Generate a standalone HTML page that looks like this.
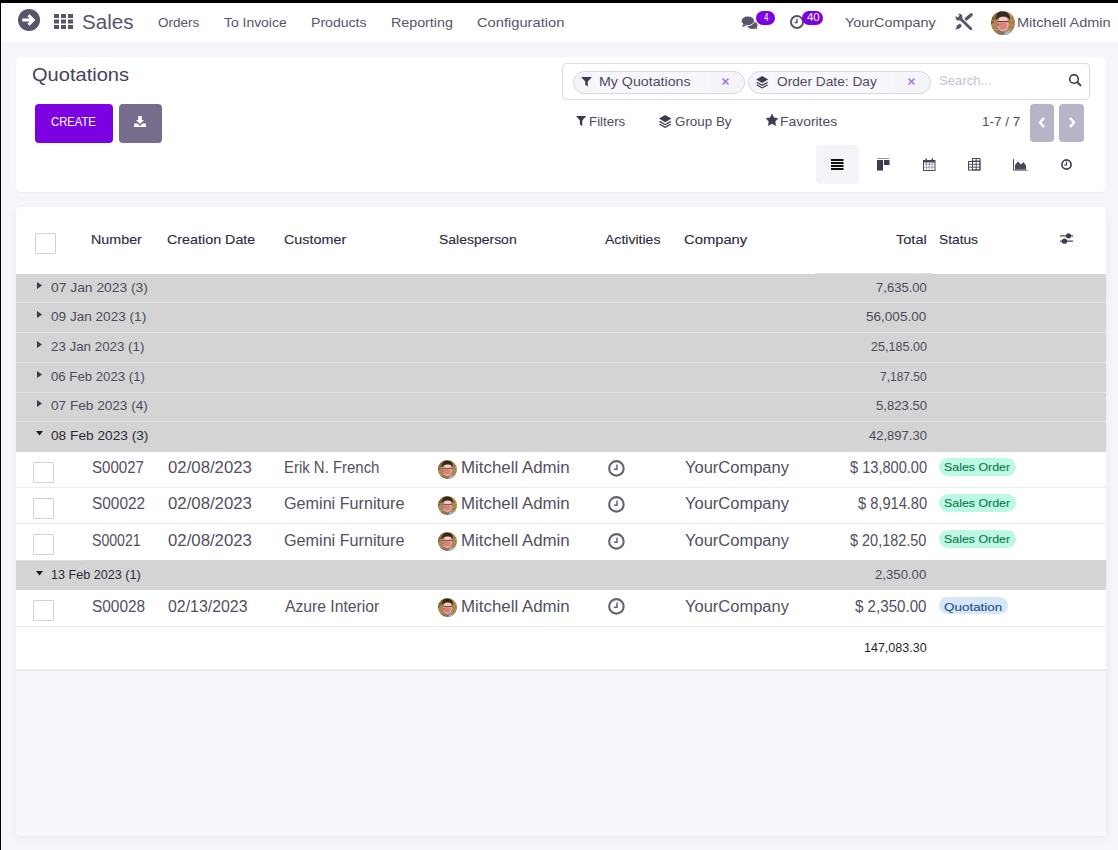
<!DOCTYPE html>
<html><head><meta charset="utf-8">
<style>
html,body{margin:0;padding:0;}
body{width:1118px;height:850px;overflow:hidden;position:relative;background:#f6f5fa;font-family:"Liberation Sans",sans-serif;}
.a{position:absolute;box-sizing:border-box;}
.t{position:absolute;white-space:pre;line-height:1;transform-origin:0 0;font-family:"Liberation Sans",sans-serif;}
svg{position:absolute;overflow:visible;}
</style></head><body>
<svg width="0" height="0" style="position:absolute;left:0;top:0"><defs>
<clipPath id="avc"><circle cx="12" cy="12" r="12"/></clipPath>
<g id="av"><g clip-path="url(#avc)">
<rect width="24" height="24" fill="#a4844f"/>
<path d="M0 0 H11 L0 14Z" fill="#6e5232" opacity=".8"/>
<path d="M0 5H24M0 9.5H24M0 14H24M0 18.5H24" stroke="#c4a46c" stroke-width="1" opacity=".55"/>
<path d="M3 24 Q5 18 12 19 Q20 18.5 22 24Z" fill="#8c7462"/>
<path d="M13 24 Q14 19.5 18 19.5 Q21 20 22 24Z" fill="#a9b6be"/>
<ellipse cx="12" cy="13" rx="5.8" ry="7.4" fill="#e6ad9e"/>
<ellipse cx="12.3" cy="8.2" rx="4.2" ry="2.2" fill="#f0cfc8"/>
<ellipse cx="11.8" cy="14.8" rx="4.2" ry="3.6" fill="#d0505c" opacity=".5"/>
<path d="M5 9.5 Q4.5 0.5 12 0.5 Q19.5 0.5 19.2 10 Q18 5.5 12.3 5.5 Q7 5.5 5 9.5Z" fill="#35271d"/>
<path d="M6.3 10.6 H17.8" stroke="#3a2e2a" stroke-width="0.9"/>
<path d="M7.5 12.5 L6.8 14.5" stroke="#c0222e" stroke-width="1.2"/>
</g></g>
</defs></svg>
<!-- frame -->
<div class="a" style="left:0;top:0;width:1118px;height:3px;background:#000"></div>
<div class="a" style="left:0;top:0;width:1px;height:850px;background:#000"></div>
<!-- navbar -->
<div class="a" style="left:1px;top:3px;width:1117px;height:39px;background:#fff"></div>
<svg style="left:17.8px;top:8.9px" width="22" height="22" viewBox="0 0 22 22">
  <circle cx="11" cy="11" r="11" fill="#58546c"/>
  <path d="M4.2 11 H14.5 M10.5 6.2 L15.3 11 L10.5 15.8" stroke="#fff" stroke-width="3" fill="none" stroke-linecap="butt" stroke-linejoin="miter"/>
</svg>
<svg style="left:54px;top:14px" width="19" height="15" viewBox="0 0 19 15">
  <g fill="#58546c">
    <rect x="0" y="0" width="5" height="4"/><rect x="7" y="0" width="5" height="4"/><rect x="14" y="0" width="5" height="4"/>
    <rect x="0" y="5.5" width="5" height="4"/><rect x="7" y="5.5" width="5" height="4"/><rect x="14" y="5.5" width="5" height="4"/>
    <rect x="0" y="11" width="5" height="4"/><rect x="7" y="11" width="5" height="4"/><rect x="14" y="11" width="5" height="4"/>
  </g>
</svg>
<!-- chat icon -->
<svg style="left:741px;top:15px" width="17" height="15" viewBox="0 0 17 15">
  <ellipse cx="11.5" cy="10.2" rx="5" ry="3.8" fill="#58546c"/>
  <path d="M13.5 12.5 L16.5 14.8 L15.2 11Z" fill="#58546c"/>
  <ellipse cx="6.8" cy="5.8" rx="6.6" ry="4.8" fill="#58546c" stroke="#fff" stroke-width="0.9"/>
  <path d="M2.3 9 L1 12.3 L5.8 10.3Z" fill="#58546c"/>
</svg>
<div class="a" style="left:756px;top:10.8px;width:19px;height:14px;border-radius:7px;background:#7c00e0"></div>

<!-- clock icon -->
<svg style="left:790px;top:14.8px" width="14" height="14" viewBox="0 0 14 14">
  <circle cx="7" cy="7" r="6" fill="#fff" stroke="#58546c" stroke-width="2"/>
  <path d="M7 3.8 V7.5 H4.5" stroke="#58546c" stroke-width="1.4" fill="none"/>
</svg>
<div class="a" style="left:802.3px;top:10.8px;width:20.8px;height:14px;border-radius:7px;background:#7c00e0"></div>

<!-- tools icon -->
<svg style="left:955px;top:12.5px" width="18" height="17" viewBox="0 0 18 17">
  <path d="M11 6.3 L16.2 1.7" stroke="#58546c" stroke-width="3.2" stroke-linecap="round"/>
  <path d="M0.5 16.8 L2 12.4 L4.9 10.4 L6.9 12.4 L4.9 15.2Z" fill="#58546c"/>
  <path d="M5 5.3 L16.2 16" stroke="#fff" stroke-width="4.8" stroke-linecap="round"/>
  <path d="M5 5.3 L15.8 15.7" stroke="#58546c" stroke-width="2.8" stroke-linecap="round"/>
  <circle cx="4" cy="4.2" r="3.4" fill="#58546c"/>
  <path d="M-0.5 1.8 L1.8 -0.5 L4.6 2.6 L2.6 4.6Z" fill="#fff"/>
</svg>
<!-- avatar nav -->
<svg style="left:990.7px;top:10.6px" width="24" height="24" viewBox="0 0 24 24"><use href="#av"/></svg>
<!-- control panel card -->
<div class="a" style="left:16px;top:57px;width:1090px;height:135px;background:#fff;border-radius:5px;box-shadow:0 1px 2px rgba(60,50,90,.04)"></div>
<div class="a" style="left:35px;top:103.6px;width:78px;height:39px;background:#7c00e1;border-radius:4px"></div>
<div class="a" style="left:119px;top:103.6px;width:43px;height:39px;background:#766d8d;border-radius:4px"></div>
<svg style="left:133.9px;top:116.4px" width="12" height="11" viewBox="0 0 12 11">
  <path d="M4.2 0 H7.8 V4 H10 L6 8 L2 4 H4.2Z" fill="#fff"/>
  <path d="M0 7.5 H3.5 L6 10 L8.5 7.5 H12 V11 H0Z" fill="#fff"/>
</svg>
<!-- search box -->
<div class="a" style="left:561.5px;top:63px;width:528px;height:37px;border:1px solid #dcdbe3;border-radius:4px;background:#fff"></div>
<div class="a" style="left:573.4px;top:70.5px;width:171.2px;height:23px;border:1px solid #d9d7e1;border-radius:12px;background:#f5f4f9"></div>
<div class="a" style="left:593.5px;top:71.5px;width:115px;height:21px;background:#f7f6fb"></div>
<svg style="left:581px;top:77.3px" width="11" height="9.5" viewBox="0 0 11 9.5">
  <path d="M0 0 H11 L6.8 4.6 V9.5 L4.2 7.8 V4.6Z" fill="#3f3c54"/>
</svg>
<svg style="left:721.5px;top:77.8px" width="7" height="7" viewBox="0 0 7 7"><path d="M0.5 0.5 L6.5 6.5 M6.5 0.5 L0.5 6.5" stroke="#a46ee8" stroke-width="1.5"/></svg>
<div class="a" style="left:748px;top:70.5px;width:183px;height:23px;border:1px solid #d9d7e1;border-radius:12px;background:#f5f4f9"></div>
<div class="a" style="left:770.4px;top:71.5px;width:124px;height:21px;background:#f7f6fb"></div>
<svg style="left:755.8px;top:75.6px" width="12.4" height="12.6" viewBox="0 0 12.4 13">
  <path d="M6.2 0 L12.4 3.6 L6.2 7.2 L0 3.6Z" fill="#3d3b50"/>
  <path d="M1.2 6.1 L0 6.9 L6.2 10.3 L12.4 6.9 L11.2 6.1 L6.2 8.9Z" fill="#3d3b50"/>
  <path d="M1.2 8.8 L0 9.6 L6.2 13 L12.4 9.6 L11.2 8.8 L6.2 11.6Z" fill="#3d3b50"/>
</svg>
<svg style="left:907.8px;top:77.8px" width="7" height="7" viewBox="0 0 7 7"><path d="M0.5 0.5 L6.5 6.5 M6.5 0.5 L0.5 6.5" stroke="#a46ee8" stroke-width="1.5"/></svg>
<svg style="left:1068.8px;top:73.8px" width="13" height="13" viewBox="0 0 13 13">
  <circle cx="5" cy="5" r="4.3" fill="none" stroke="#2f2d40" stroke-width="1.5"/>
  <path d="M8.2 8.2 L11.5 11.4" stroke="#2f2d40" stroke-width="1.7" stroke-linecap="round"/>
</svg>
<!-- filters row icons -->
<svg style="left:576.4px;top:116px" width="10.2" height="10.2" viewBox="0 0 10.2 10.2">
  <path d="M0 0 H10.2 L6.3 4.5 V10.2 L3.9 8.2 V4.5Z" fill="#3d3b50"/>
</svg>
<svg style="left:659.2px;top:114.5px" width="12.4" height="13" viewBox="0 0 12.4 13">
  <path d="M6.2 0 L12.4 3.6 L6.2 7.2 L0 3.6Z" fill="#3d3b50"/>
  <path d="M1.2 6.1 L0 6.9 L6.2 10.3 L12.4 6.9 L11.2 6.1 L6.2 8.9Z" fill="#3d3b50"/>
  <path d="M1.2 8.8 L0 9.6 L6.2 13 L12.4 9.6 L11.2 8.8 L6.2 11.6Z" fill="#3d3b50"/>
</svg>
<svg style="left:765.8px;top:114.2px" width="12" height="12" viewBox="0 0 12 12">
  <path d="M6.00 0.10 L7.88 3.81 L11.99 4.45 L9.04 7.39 L9.70 11.50 L6.00 9.60 L2.30 11.50 L2.96 7.39 L0.01 4.45 L4.12 3.81Z" fill="#3d3b50" stroke="#3d3b50" stroke-width="0.5" stroke-linejoin="round"/>
</svg>
<!-- pager -->
<div class="a" style="left:1029.5px;top:104px;width:24.5px;height:37.6px;background:#b8b4c7;border-radius:4px"></div>
<div class="a" style="left:1059.3px;top:104px;width:25.2px;height:37.6px;background:#b8b4c7;border-radius:4px"></div>
<svg style="left:1038px;top:117px" width="8" height="11" viewBox="0 0 8 11"><path d="M6 1 L2 5.5 L6 10" stroke="#fff" stroke-width="2.4" fill="none"/></svg>
<svg style="left:1068px;top:117px" width="8" height="11" viewBox="0 0 8 11"><path d="M2 1 L6 5.5 L2 10" stroke="#fff" stroke-width="2.4" fill="none"/></svg>
<!-- view switcher -->
<div class="a" style="left:816px;top:145px;width:43px;height:39px;background:#f4f3f8;border-radius:4px"></div>
<svg style="left:831px;top:158.5px" width="12.5" height="11" viewBox="0 0 12.5 11">
  <g fill="#111"><rect x="0" y="0" width="12.5" height="2"/><rect x="0" y="3" width="12.5" height="2"/><rect x="0" y="6" width="12.5" height="2"/><rect x="0" y="9" width="12.5" height="2"/></g>
</svg>
<svg style="left:877.3px;top:157.8px" width="12.5" height="12.5" viewBox="0 0 12.5 12.5">
  <rect x="0" y="0" width="12.5" height="1" fill="#9a98a6"/>
  <rect x="0" y="2" width="6" height="10.5" fill="#3d3b4d"/>
  <rect x="7" y="2" width="5.5" height="5" fill="#3d3b4d"/>
</svg>
<svg style="left:922.8px;top:158px" width="12.5" height="13" viewBox="0 0 12.5 13">
  <rect x="0.5" y="2.5" width="11.5" height="10" fill="#fff" stroke="#4a4858" stroke-width="1"/>
  <path d="M0.5 6.2 H12 M0.5 9.2 H12 M3.4 4.5 V12.5 M6.2 4.5 V12.5 M9.1 4.5 V12.5" stroke="#8a889a" stroke-width="0.7"/>
  <rect x="0.5" y="2.5" width="11.5" height="2" fill="#4a4858"/>
  <rect x="2.4" y="0.3" width="1.5" height="3.2" rx=".7" fill="#4a4858"/><rect x="8.6" y="0.3" width="1.5" height="3.2" rx=".7" fill="#4a4858"/>
</svg>
<svg style="left:967.8px;top:158px" width="12.5" height="12.5" viewBox="0 0 12.5 12.5">
  <rect x="4.5" y="0.5" width="7.5" height="11.5" fill="none" stroke="#4a4858" stroke-width="1"/>
  <rect x="0.5" y="3.5" width="11.5" height="8.5" fill="none" stroke="#4a4858" stroke-width="1"/>
  <path d="M0.5 6.3 H12 M0.5 9.2 H12 M4.5 3.5 V12 M8.2 0.5 V12 M4.5 3 H12" stroke="#4a4858" stroke-width="0.9"/>
</svg>
<svg style="left:1013.3px;top:158.8px" width="14.5" height="11.6" viewBox="0 0 14.5 11.6">
  <path d="M0.5 0 V11.1 H14.5" stroke="#4a4858" stroke-width="1" fill="none"/>
  <path d="M2 10.5 V6 L5 2.5 L8 5.5 L10.5 3 L13 6.5 V10.5Z" fill="#4a4858"/>
</svg>
<svg style="left:1060.8px;top:159px" width="11" height="11" viewBox="0 0 11 11">
  <circle cx="5.5" cy="5.5" r="4.6" fill="none" stroke="#3d3b4d" stroke-width="1.6"/>
  <path d="M5.5 2.6 V6 H3.3" stroke="#3d3b4d" stroke-width="1.1" fill="none"/>
</svg>

<!-- list card -->
<div class="a" style="left:16px;top:207px;width:1090px;height:629px;background:#f8f7fb;border-radius:3px;box-shadow:0 3px 8px rgba(60,50,90,.06)"></div>
<div class="a" style="left:16px;top:207px;width:1090px;height:462px;background:#fff;border-radius:5px 5px 0 0"></div>
<div class="a" style="left:16px;top:669px;width:1090px;height:1px;background:#f1f0f5"></div>
<div class="a" style="left:16px;top:670px;width:1090px;height:1px;background:#e5e4ea"></div>
<!-- header checkbox -->
<div class="a" style="left:35.3px;top:232.5px;width:20.5px;height:21px;border:1px solid #d2d2d4;border-radius:1px;background:#fff"></div>
<svg style="left:1060px;top:232.6px" width="13" height="11" viewBox="0 0 13 11">
  <path d="M0 2.8 H13 M0 8.2 H13" stroke="#4a4858" stroke-width="1.2"/>
  <circle cx="8.5" cy="2.8" r="2.6" fill="#3d3b4d"/><circle cx="4.5" cy="8.2" r="2.6" fill="#3d3b4d"/>
</svg>
<!-- group rows -->
<div class="a" style="left:16px;top:274px;width:1090px;height:177.6px;background:#d4d4d4"></div>
<div class="a" style="left:16px;top:302px;width:1090px;height:1px;background:#e2e2e6"></div>
<div class="a" style="left:16px;top:332px;width:1090px;height:1px;background:#e2e2e6"></div>
<div class="a" style="left:16px;top:361.5px;width:1090px;height:1px;background:#e2e2e6"></div>
<div class="a" style="left:16px;top:391.5px;width:1090px;height:1px;background:#e2e2e6"></div>
<div class="a" style="left:16px;top:421.2px;width:1090px;height:1px;background:#e2e2e6"></div>
<div class="a" style="left:815px;top:273.4px;width:118px;height:1px;background:#e2e2e2"></div>
<svg style="left:37.2px;top:281.8px" width="5" height="7" viewBox="0 0 5 7"><path d="M0 0 L5 3.5 L0 7Z" fill="#3d3b4d"/></svg>
<svg style="left:37.2px;top:311.4px" width="5" height="7" viewBox="0 0 5 7"><path d="M0 0 L5 3.5 L0 7Z" fill="#3d3b4d"/></svg>
<svg style="left:37.2px;top:341px" width="5" height="7" viewBox="0 0 5 7"><path d="M0 0 L5 3.5 L0 7Z" fill="#3d3b4d"/></svg>
<svg style="left:37.2px;top:370.6px" width="5" height="7" viewBox="0 0 5 7"><path d="M0 0 L5 3.5 L0 7Z" fill="#3d3b4d"/></svg>
<svg style="left:37.2px;top:400.2px" width="5" height="7" viewBox="0 0 5 7"><path d="M0 0 L5 3.5 L0 7Z" fill="#3d3b4d"/></svg>
<svg style="left:36px;top:431.3px" width="7" height="4.5" viewBox="0 0 7 4.5"><path d="M0 0 H7 L3.5 4.5Z" fill="#1a1a28"/></svg>
<!-- record rows separators -->
<div class="a" style="left:16px;top:487px;width:1090px;height:1px;background:#ebebee"></div>
<div class="a" style="left:16px;top:523.3px;width:1090px;height:1px;background:#ebebee"></div>
<div class="a" style="left:16px;top:560.1px;width:1090px;height:29.6px;background:#d4d4d4"></div>
<div class="a" style="left:16px;top:560.1px;width:70px;height:1px;background:#dcdcdc"></div>
<svg style="left:36px;top:570.5px" width="7" height="4.5" viewBox="0 0 7 4.5"><path d="M0 0 H7 L3.5 4.5Z" fill="#1a1a28"/></svg>
<div class="a" style="left:16px;top:626px;width:1090px;height:1px;background:#ebebee"></div>
<div class="a" style="left:32.5px;top:461.6px;width:21px;height:21px;border:1px solid #d2d2d4;border-radius:1px;background:#fff"></div>
<svg style="left:438.2px;top:459.6px" width="19" height="19" viewBox="0 0 24 24"><use href="#av"/></svg>
<svg style="left:608.2px;top:459.9px" width="17" height="17" viewBox="0 0 17 17"><circle cx="8.4" cy="8.4" r="7.25" fill="none" stroke="#646474" stroke-width="2.1"/><path d="M9 4.6 V9.2 H5.9" stroke="#646474" stroke-width="1.5" fill="none"/></svg>
<div class="a" style="left:939.4px;top:457.6px;width:76.5px;height:18px;border-radius:9px;background:#bdf8e2"></div>
<div class="a" style="left:32.5px;top:497.5px;width:21px;height:21px;border:1px solid #d2d2d4;border-radius:1px;background:#fff"></div>
<svg style="left:438.2px;top:495.5px" width="19" height="19" viewBox="0 0 24 24"><use href="#av"/></svg>
<svg style="left:608.2px;top:495.8px" width="17" height="17" viewBox="0 0 17 17"><circle cx="8.4" cy="8.4" r="7.25" fill="none" stroke="#646474" stroke-width="2.1"/><path d="M9 4.6 V9.2 H5.9" stroke="#646474" stroke-width="1.5" fill="none"/></svg>
<div class="a" style="left:939.4px;top:493.5px;width:76.5px;height:18px;border-radius:9px;background:#bdf8e2"></div>
<div class="a" style="left:32.5px;top:534.3px;width:21px;height:21px;border:1px solid #d2d2d4;border-radius:1px;background:#fff"></div>
<svg style="left:438.2px;top:532.3px" width="19" height="19" viewBox="0 0 24 24"><use href="#av"/></svg>
<svg style="left:608.2px;top:532.6px" width="17" height="17" viewBox="0 0 17 17"><circle cx="8.4" cy="8.4" r="7.25" fill="none" stroke="#646474" stroke-width="2.1"/><path d="M9 4.6 V9.2 H5.9" stroke="#646474" stroke-width="1.5" fill="none"/></svg>
<div class="a" style="left:939.4px;top:530.3px;width:76.5px;height:18px;border-radius:9px;background:#bdf8e2"></div>
<div class="a" style="left:32.5px;top:599.7px;width:21px;height:21px;border:1px solid #d2d2d4;border-radius:1px;background:#fff"></div>
<svg style="left:438.2px;top:597.7px" width="19" height="19" viewBox="0 0 24 24"><use href="#av"/></svg>
<svg style="left:608.2px;top:598.0px" width="17" height="17" viewBox="0 0 17 17"><circle cx="8.4" cy="8.4" r="7.25" fill="none" stroke="#646474" stroke-width="2.1"/><path d="M9 4.6 V9.2 H5.9" stroke="#646474" stroke-width="1.5" fill="none"/></svg>
<div class="a" style="left:939.4px;top:596.8px;width:68.5px;height:17px;border-radius:8.5px;background:#d5e7f9"></div>
<span class="t" style="left:81.67px;top:11.82px;font-size:20px;color:#58546c;transform:scaleX(1.0280);">Sales</span>
<span class="t" style="left:157.68px;top:15.59px;font-size:13px;color:#58546c;transform:scaleX(1.0400);">Orders</span>
<span class="t" style="left:224.43px;top:15.59px;font-size:13px;color:#58546c;transform:scaleX(1.0701);">To Invoice</span>
<span class="t" style="left:310.82px;top:15.59px;font-size:13px;color:#58546c;transform:scaleX(1.0820);">Products</span>
<span class="t" style="left:390.50px;top:15.59px;font-size:13px;color:#58546c;transform:scaleX(1.0972);">Reporting</span>
<span class="t" style="left:476.54px;top:15.59px;font-size:13px;color:#58546c;transform:scaleX(1.1289);">Configuration</span>
<span class="t" style="left:844.82px;top:15.59px;font-size:13px;color:#58546c;transform:scaleX(1.1067);">YourCompany</span>
<span class="t" style="left:1017.18px;top:15.59px;font-size:13px;color:#58546c;transform:scaleX(1.1171);">Mitchell Admin</span>
<span class="t" style="left:763.52px;top:12.19px;font-size:11px;color:#fff;transform:scaleX(0.7130);">4</span>
<span class="t" style="left:806.54px;top:12.19px;font-size:11px;color:#fff;transform:scaleX(1.0383);">40</span>
<span class="t" style="left:31.64px;top:66.68px;font-size:17.5px;color:#45425a;transform:scaleX(1.1459);">Quotations</span>
<span class="t" style="left:51.23px;top:115.84px;font-size:12px;color:#ffffff;transform:scaleX(0.9390);">CREATE</span>
<span class="t" style="left:598.85px;top:75.17px;font-size:13.5px;color:#4f4b63;transform:scaleX(1.0519);">My Quotations</span>
<span class="t" style="left:776.69px;top:75.17px;font-size:13.5px;color:#4f4b63;transform:scaleX(1.0148);">Order Date: Day</span>
<span class="t" style="left:939.39px;top:74.19px;font-size:13px;color:#c6c4d3;transform:scaleX(1.0119);">Search...</span>
<span class="t" style="left:589.08px;top:114.79px;font-size:13px;color:#4f4b63;transform:scaleX(1.0235);">Filters</span>
<span class="t" style="left:675.19px;top:114.79px;font-size:13px;color:#4f4b63;transform:scaleX(1.0294);">Group By</span>
<span class="t" style="left:780.23px;top:114.79px;font-size:13px;color:#4f4b63;transform:scaleX(1.0692);">Favorites</span>
<span class="t" style="left:981.66px;top:115.19px;font-size:13px;color:#4f4b63;transform:scaleX(1.0383);">1-7 / 7</span>
<span class="t" style="left:91.40px;top:233.49px;font-size:13px;color:#2e2c3c;-webkit-text-stroke:0.12px #2e2c3c;transform:scaleX(1.1000);">Number</span>
<span class="t" style="left:167.45px;top:233.49px;font-size:13px;color:#2e2c3c;-webkit-text-stroke:0.12px #2e2c3c;transform:scaleX(1.1009);">Creation Date</span>
<span class="t" style="left:283.70px;top:233.49px;font-size:13px;color:#2e2c3c;-webkit-text-stroke:0.12px #2e2c3c;transform:scaleX(1.1031);">Customer</span>
<span class="t" style="left:438.86px;top:233.49px;font-size:13px;color:#2e2c3c;-webkit-text-stroke:0.12px #2e2c3c;transform:scaleX(1.0746);">Salesperson</span>
<span class="t" style="left:604.60px;top:233.49px;font-size:13px;color:#2e2c3c;-webkit-text-stroke:0.12px #2e2c3c;transform:scaleX(1.0804);">Activities</span>
<span class="t" style="left:683.73px;top:233.49px;font-size:13px;color:#2e2c3c;-webkit-text-stroke:0.12px #2e2c3c;transform:scaleX(1.1364);">Company</span>
<span class="t" style="left:896.47px;top:233.49px;font-size:13px;color:#2e2c3c;-webkit-text-stroke:0.12px #2e2c3c;transform:scaleX(1.1189);">Total</span>
<span class="t" style="left:939.37px;top:233.49px;font-size:13px;color:#2e2c3c;-webkit-text-stroke:0.12px #2e2c3c;transform:scaleX(1.0583);">Status</span>
<span class="t" style="left:51.47px;top:280.69px;font-size:13px;color:#4e4b5c;transform:scaleX(1.0641);">07 Jan 2023 (3)</span>
<span class="t" style="left:875.90px;top:280.69px;font-size:13px;color:#4e4b5c;transform:scaleX(1.0050);">7,635.00</span>
<span class="t" style="left:51.48px;top:310.34px;font-size:13px;color:#4e4b5c;transform:scaleX(1.0451);">09 Jan 2023 (1)</span>
<span class="t" style="left:866.48px;top:310.34px;font-size:13px;color:#4e4b5c;transform:scaleX(1.0421);">56,005.00</span>
<span class="t" style="left:51.49px;top:339.99px;font-size:13px;color:#4e4b5c;transform:scaleX(1.0251);">23 Jan 2023 (1)</span>
<span class="t" style="left:870.72px;top:339.99px;font-size:13px;color:#4e4b5c;transform:scaleX(0.9684);">25,185.00</span>
<span class="t" style="left:51.49px;top:369.64px;font-size:13px;color:#4e4b5c;transform:scaleX(1.0148);">06 Feb 2023 (1)</span>
<span class="t" style="left:880.04px;top:369.64px;font-size:13px;color:#4e4b5c;transform:scaleX(0.9226);">7,187.50</span>
<span class="t" style="left:51.48px;top:399.29px;font-size:13px;color:#4e4b5c;transform:scaleX(1.0466);">07 Feb 2023 (4)</span>
<span class="t" style="left:875.59px;top:399.29px;font-size:13px;color:#4e4b5c;transform:scaleX(1.0111);">5,823.50</span>
<span class="t" style="left:51.47px;top:428.94px;font-size:13px;color:#2c2a38;transform:scaleX(1.0532);">08 Feb 2023 (3)</span>
<span class="t" style="left:869.05px;top:428.94px;font-size:13px;color:#4e4b5c;">42,897.30</span>
<span class="t" style="left:91.99px;top:460.05px;font-size:16px;color:#525061;transform:scaleX(0.9414);">S00027</span>
<span class="t" style="left:167.88px;top:460.05px;font-size:16px;color:#525061;transform:scaleX(1.0481);">02/08/2023</span>
<span class="t" style="left:284.03px;top:460.05px;font-size:16px;color:#525061;transform:scaleX(0.9330);">Erik N. French</span>
<span class="t" style="left:460.78px;top:460.05px;font-size:16px;color:#525061;transform:scaleX(1.0535);">Mitchell Admin</span>
<span class="t" style="left:685.24px;top:460.05px;font-size:16px;color:#525061;transform:scaleX(1.0308);">YourCompany</span>
<span class="t" style="left:849.57px;top:460.05px;font-size:16px;color:#525061;transform:scaleX(0.9122);">$ 13,800.00</span>
<span class="t" style="left:91.98px;top:495.55px;font-size:16px;color:#525061;transform:scaleX(0.9619);">S00022</span>
<span class="t" style="left:167.88px;top:495.55px;font-size:16px;color:#525061;transform:scaleX(1.0481);">02/08/2023</span>
<span class="t" style="left:284.44px;top:495.55px;font-size:16px;color:#525061;transform:scaleX(1.0106);">Gemini Furniture</span>
<span class="t" style="left:460.78px;top:495.55px;font-size:16px;color:#525061;transform:scaleX(1.0535);">Mitchell Admin</span>
<span class="t" style="left:685.24px;top:495.55px;font-size:16px;color:#525061;transform:scaleX(1.0308);">YourCompany</span>
<span class="t" style="left:857.67px;top:495.55px;font-size:16px;color:#525061;transform:scaleX(0.9137);">$ 8,914.80</span>
<span class="t" style="left:92.04px;top:532.65px;font-size:16px;color:#525061;transform:scaleX(0.8800);">S00021</span>
<span class="t" style="left:167.88px;top:532.65px;font-size:16px;color:#525061;transform:scaleX(1.0481);">02/08/2023</span>
<span class="t" style="left:284.44px;top:532.65px;font-size:16px;color:#525061;transform:scaleX(1.0106);">Gemini Furniture</span>
<span class="t" style="left:460.78px;top:532.65px;font-size:16px;color:#525061;transform:scaleX(1.0535);">Mitchell Admin</span>
<span class="t" style="left:685.24px;top:532.65px;font-size:16px;color:#525061;transform:scaleX(1.0308);">YourCompany</span>
<span class="t" style="left:850.27px;top:532.65px;font-size:16px;color:#525061;transform:scaleX(0.9039);">$ 20,182.50</span>
<span class="t" style="left:91.98px;top:598.55px;font-size:16px;color:#525061;transform:scaleX(0.9619);">S00028</span>
<span class="t" style="left:167.90px;top:598.55px;font-size:16px;color:#525061;transform:scaleX(0.9924);">02/13/2023</span>
<span class="t" style="left:285.20px;top:598.55px;font-size:16px;color:#525061;transform:scaleX(0.9807);">Azure Interior</span>
<span class="t" style="left:460.78px;top:598.55px;font-size:16px;color:#525061;transform:scaleX(1.0535);">Mitchell Admin</span>
<span class="t" style="left:685.24px;top:598.55px;font-size:16px;color:#525061;transform:scaleX(1.0308);">YourCompany</span>
<span class="t" style="left:855.26px;top:598.55px;font-size:16px;color:#525061;transform:scaleX(0.9458);">$ 2,350.00</span>
<span class="t" style="left:944.44px;top:461.79px;font-size:11px;color:#0b7a50;-webkit-text-stroke:0.12px #0b7a50;transform:scaleX(1.1259);">Sales Order</span>
<span class="t" style="left:944.44px;top:497.99px;font-size:11px;color:#0b7a50;-webkit-text-stroke:0.12px #0b7a50;transform:scaleX(1.1259);">Sales Order</span>
<span class="t" style="left:944.44px;top:534.39px;font-size:11px;color:#0b7a50;-webkit-text-stroke:0.12px #0b7a50;transform:scaleX(1.1259);">Sales Order</span>
<span class="t" style="left:944.39px;top:601.69px;font-size:11px;color:#1d4f8a;-webkit-text-stroke:0.12px #1d4f8a;transform:scaleX(1.2215);">Quotation</span>
<span class="t" style="left:51.03px;top:567.79px;font-size:13px;color:#2c2a38;transform:scaleX(0.9697);">13 Feb 2023 (1)</span>
<span class="t" style="left:875.49px;top:567.79px;font-size:13px;color:#4e4b5c;transform:scaleX(1.0131);">2,350.00</span>
<span class="t" style="left:864.14px;top:641.49px;font-size:13px;color:#1f1f2a;transform:scaleX(0.9622);">147,083.30</span>
</body></html>
